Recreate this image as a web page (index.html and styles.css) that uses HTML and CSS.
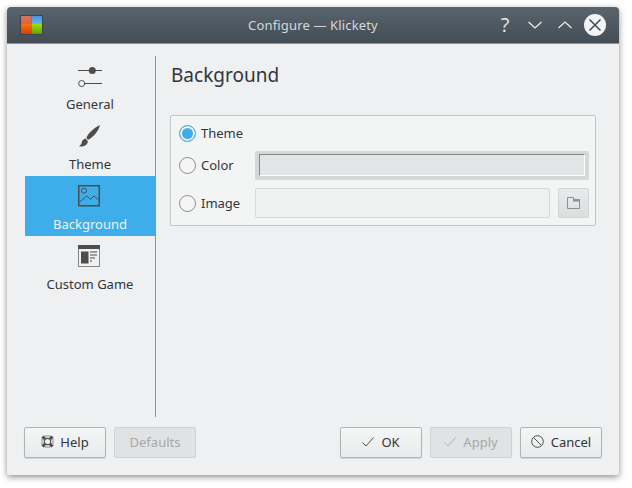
FILE: index.html
```html
<!DOCTYPE html>
<html lang="en">
<head>
<meta charset="utf-8">
<title>Configure — Klickety</title>
<link rel="stylesheet" href="styles.css">
</head>
<body>
<div class="window">
  <header class="titlebar">
    <svg class="app-icon" width="23" height="20" viewBox="0 0 23 20">
      <defs>
        <linearGradient id="r" x1="0" y1="0" x2="0" y2="1"><stop offset="0" stop-color="#cf7560"/><stop offset="1" stop-color="#e2603f"/></linearGradient>
        <linearGradient id="b" x1="0" y1="0" x2="0" y2="1"><stop offset="0" stop-color="#4c93d8"/><stop offset="1" stop-color="#5fb6f7"/></linearGradient>
        <linearGradient id="o" x1="0" y1="0" x2="0" y2="1"><stop offset="0" stop-color="#f9720d"/><stop offset="1" stop-color="#d93f03"/></linearGradient>
        <linearGradient id="g" x1="0" y1="0" x2="0" y2="1"><stop offset="0" stop-color="#9cdf12"/><stop offset="1" stop-color="#5ca405"/></linearGradient>
      </defs>
      <rect width="23" height="20" rx="1" fill="#3f4148"/>
      <rect x="1" y="1" width="10.500" height="8" fill="url(#r)"/>
      <rect x="11.500" y="1" width="10.500" height="8" fill="url(#b)"/>
      <rect x="1" y="9" width="10.500" height="10" fill="url(#o)"/>
      <rect x="11.500" y="9" width="10.500" height="10" fill="url(#g)"/>
    </svg>
    <div class="title">Configure — Klickety</div>
    <div class="controls">
      <span class="help-mark">?</span>
      <svg class="ctl" width="16" height="16" viewBox="0 0 16 16"><path d="M1.500 5l6.500 6L14.500 5" fill="none" stroke="#eff0f1" stroke-width="1.200"/></svg>
      <svg class="ctl last" width="16" height="16" viewBox="0 0 16 16"><path d="M1.500 11L8 5l6.500 6" fill="none" stroke="#eff0f1" stroke-width="1.200"/></svg>
      <svg class="close" width="22" height="22" viewBox="0 0 22 22"><circle cx="11" cy="11" r="11" fill="#f2f3f4"/><path d="M5.500 5.500l11 11M16.500 5.500l-11 11" stroke="#3f474e" stroke-width="1.500"/></svg>
    </div>
  </header>
  <div class="body">
    <div class="main">
      <nav class="sidebar">
        <div class="nav-item">
          <svg width="24" height="24" viewBox="0 0 24 24"><path d="M0 6.500h11M17 6.500h7M6 19.500h18" stroke="#4d4d4d" fill="none"/><circle cx="14.300" cy="6.500" r="3.500" fill="#4d4d4d"/><circle cx="3.700" cy="19.500" r="3" fill="none" stroke="#4d4d4d"/></svg>
          <span>General</span>
        </div>
        <div class="nav-item">
          <svg width="24" height="24" viewBox="0 0 24 24"><path d="M22 1C16 4 10.500 9 8.500 13.500c-.3 1 1.500 2.500 2.500 2C15.500 12.500 20.500 7 22 1zM7.500 14.500c-2 .5-3 1.500-3.500 3-.2 1.500-1 3.500-3 5 3 .5 7-.5 8.500-3.500.5-1 .3-2-.5-3z" fill="#4d4d4d"/></svg>
          <span>Theme</span>
        </div>
        <div class="nav-item active">
          <svg width="24" height="24" viewBox="0 0 24 24"><rect x=".75" y="1.750" width="20.500" height="20" fill="none" stroke="#4d4d4d" stroke-width="1.500"/><circle cx="6" cy="6.700" r="2.500" fill="none" stroke="#4d4d4d"/><path d="M1.300 18.300l7.400-6.300 4 3.300 3.300-3.300 4.700 4" fill="none" stroke="#4d4d4d"/></svg>
          <span>Background</span>
        </div>
        <div class="nav-item">
          <svg width="24" height="24" viewBox="0 0 24 24"><rect x=".5" y="1.500" width="21" height="21" fill="#eff0f1" stroke="#858789"/><rect y="1" width="22" height="4" fill="#4d4d4d"/><rect x="3" y="7.500" width="7.500" height="12" fill="#4d4d4d"/><path d="M12 8h7M12 11h7M12 14h5M12 17h2" stroke="#4d4d4d"/></svg>
          <span>Custom Game</span>
        </div>
      </nav>
      <section class="page">
        <h1>Background</h1>
        <div class="group">
          <div class="row row-theme">
            <span class="radio checked"></span>
            <span class="label">Theme</span>
          </div>
          <div class="row row-color">
            <span class="radio"></span>
            <span class="label">Color</span>
            <div class="color-field"><div class="color-inner"></div></div>
          </div>
          <div class="row row-image">
            <span class="radio"></span>
            <span class="label">Image</span>
            <div class="image-field"></div>
            <div class="browse">
              <svg width="13" height="12" viewBox="0 0 13 12"><path d="M.5 11.500V.5h6v2h6v9z" fill="none" stroke="#8e9194"/><path d="M6 2h1v1h6v1.500H6z" fill="#8e9194"/></svg>
            </div>
          </div>
        </div>
      </section>
    </div>
    <footer class="buttons">
      <div class="btn btn-help">
        <svg width="13" height="13" viewBox="0 0 13 13"><path d="M3.500 1h6M3.500 12h6M1 3.500v6M12 3.500v6" stroke="#8a8b8c" fill="none"/><circle cx="6.500" cy="6.500" r="3.200" fill="none" stroke="#4d4d4d" stroke-width="1.200"/><path d="M1.500 1.500l2.500 2.500M11.500 1.500L9 4M1.500 11.500L4 9M11.500 11.500L9 9" stroke="#4d4d4d" stroke-width="3"/></svg>
        <span>Help</span>
      </div>
      <div class="btn disabled"><span>Defaults</span></div>
      <div class="spacer"></div>
      <div class="btn">
        <svg width="12" height="10" viewBox="0 0 12 10"><path d="M.5 5.500l3.500 3.500 7.500-8.500" fill="none" stroke="#4d4d4d"/></svg>
        <span>OK</span>
      </div>
      <div class="btn disabled">
        <svg width="12" height="10" viewBox="0 0 12 10"><path d="M.5 5.500l3.500 3.500 7.500-8.500" fill="none" stroke="#b0b2b4"/></svg>
        <span>Apply</span>
      </div>
      <div class="btn">
        <svg width="13" height="13" viewBox="0 0 13 13"><circle cx="6.500" cy="6.500" r="5.800" fill="none" stroke="#4d4d4d"/><path d="M2.500 2.500l8 8" stroke="#4d4d4d"/></svg>
        <span>Cancel</span>
      </div>
    </footer>
  </div>
</div>
</body>
</html>
```
FILE: styles.css
```css
* { box-sizing: border-box; }
html, body { margin: 0; padding: 0; background: #fff; }
body { padding: 7px 13px 13px 7px; font-family: "Noto Sans", sans-serif; font-size: 13px; color: #31363b; }

.window {
  width: 612px;
  height: 468px;
  border-radius: 4px 4px 2px 2px;
  background: #eff0f1;
  box-shadow: 0 2px 6px rgba(0,0,0,.45);
  display: flex;
  flex-direction: column;
}

.titlebar {
  height: 37px;
  flex: none;
  display: grid;
  grid-template-columns: 1fr auto 1fr;
  align-items: center;
  padding: 0 13px;
  background: linear-gradient(#5a646c, #434d55);
  border-bottom: 1px solid #3daee9;
  border-radius: 4px 4px 0 0;
}
.app-icon { display: block; margin-top: -1px; }
.title { text-align: center; color: #d5d8da; line-height: 18px; letter-spacing: .15px; }
.controls { display: flex; align-items: center; justify-content: flex-end; }
.help-mark { width: 16px; text-align: center; color: #e6e8ea; font-family: "Open Sans", sans-serif; font-size: 20px; line-height: 22px; margin-right: 14px; }
.ctl { margin-right: 14px; }
.ctl.last { margin-right: 11px; }

.body {
  flex: 1;
  display: flex;
  flex-direction: column;
  padding: 12px 17px 17px 17px;
  min-height: 0;
}
.main { flex: 1; display: flex; min-height: 0; }

.sidebar {
  width: 131px;
  margin-left: 1px;
  flex: none;
  border-right: 1px solid #3daee9;
}
.nav-item {
  height: 60px;
  width: 130px;
  display: flex;
  flex-direction: column;
  align-items: center;
  padding-top: 8px;
  color: #31363b;
  line-height: 18px;
}
.nav-item svg { flex: none; }
.nav-item span { margin-top: 7px; }
.nav-item.active { background: #3daee9; color: #eff0f1; }

.page { flex: 1; padding: 0 6px 0 14px; }
h1 { margin: 0; padding: 7px 0 0 1px; font-weight: 400; font-size: 19px; line-height: 24px; height: 59px; color: #31363b; }

.group {
  height: 111px;
  border: 1px solid #c2c4c6;
  border-radius: 2px;
  background: #f3f4f4;
  padding: 0 6px 0 8px;
  display: flex;
  flex-direction: column;
}
.row { display: flex; align-items: center; }
.row-theme { height: 34px; }
.row-color { height: 30px; }
.row-image { height: 30px; margin-top: 8px; }
.radio {
  width: 17px;
  height: 17px;
  border-radius: 50%;
  border: 1px solid #8a8d90;
  background: #f5f5f5;
  flex: none;
  margin-right: 5px;
}
.radio.checked { border-color: #3daee9; background: #3daee9; box-shadow: inset 0 0 0 2px #f3f4f4; }
.label { width: 54px; flex: none; line-height: 18px; }
.color-field {
  flex: 1;
  height: 29px;
  margin-top: 1px;
  background: #d6d7d8;
  border-radius: 2px;
  padding: 3px 4px 4px 4px;
}
.color-inner {
  height: 100%;
  background: #e3e4e5;
  border: 1px solid #fff;
  border-top-color: #858789;
  border-left-color: #858789;
}
.image-field {
  flex: 1;
  height: 30px;
  background: #eff0f0;
  border: 1px solid #d8d9da;
  border-radius: 2px;
}
.browse {
  flex: none;
  width: 31px;
  height: 30px;
  margin-left: 8px;
  border-radius: 2px;
  background: linear-gradient(#e9eaeb, #dcddde);
  border: 1px solid #d3d4d5;
  display: flex;
  align-items: center;
  justify-content: center;
}

.buttons { flex: none; display: flex; height: 31px; margin-top: 10px; gap: 8px; }
.spacer { flex: 1; }
.btn {
  width: 82px;
  height: 31px;
  padding-bottom: 2px;
  border: 1px solid #b0b2b4;
  border-radius: 2px;
  background: linear-gradient(#f5f6f6, #e9eaeb);
  box-shadow: 0 1px 1px rgba(0,0,0,.12);
  display: flex;
  align-items: center;
  justify-content: center;
  gap: 7px;
  color: #31363b;
}
.btn-help { gap: 6px; }
.btn.disabled { background: #e1e2e3; border-color: #d0d1d2; color: #a7a9ab; box-shadow: none; }
.btn span { line-height: 18px; }
```
